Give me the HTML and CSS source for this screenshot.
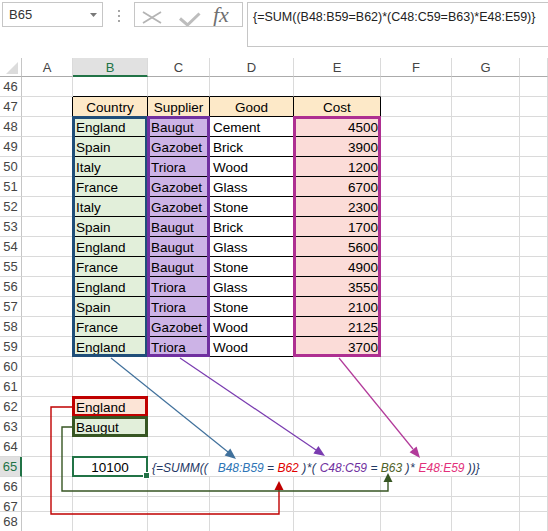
FILE: index.html
```html
<!DOCTYPE html>
<html lang="en">
<head>
    <meta charset="UTF-8">
    <title>SUMM array formula</title>
    <link rel="stylesheet" href="styles.css">
</head>
<body>

<div class="app">

    <!-- Formula bar -->
    <div class="formula-bar">
        <div class="name-box">
            <span>B65</span>
            <svg class="drop" width="7" height="4" viewBox="0 0 7 4"><path d="M0 0H7L3.5 4Z"/></svg>
        </div>
        <div class="grip"><i></i><i></i><i></i></div>
        <div class="fx-box">
            <svg width="107" height="23" viewBox="0 0 107 23">
                <path d="M8 9L26 20M8 20L26 9" stroke="#b4b4b4" stroke-width="1.8" fill="none"/>
                <path d="M45 15.5L52.5 22L64.5 10.5" stroke="#bdbdbd" stroke-width="3" fill="none"/>
                <text x="78" y="19" class="fx">fx</text>
            </svg>
        </div>
        <div class="formula-box">{=SUM((B48:B59=B62)*(C48:C59=B63)*E48:E59)}</div>
    </div>

    <!-- Sheet -->
    <div class="sheet">
        <div class="cells">
            <!-- column headers -->
            <div class="c corner"><svg width="12" height="12" viewBox="0 0 12 12"><path d="M12 0V12H0Z"/></svg></div>
            <div class="c ch">A</div>
            <div class="c ch active">B</div>
            <div class="c ch">C</div>
            <div class="c ch">D</div>
            <div class="c ch">E</div>
            <div class="c ch">F</div>
            <div class="c ch">G</div>
            <div class="c ch"></div>

            <!-- 46 -->
            <div class="c rh">46</div><div class="c"></div>
            <div class="c bb"></div><div class="c bb"></div><div class="c bb"></div><div class="c bb"></div>
            <div class="c"></div><div class="c"></div><div class="c"></div>

            <!-- 47 -->
            <div class="c rh">47</div><div class="c br"></div>
            <div class="c t hd">Country</div><div class="c t hd">Supplier</div><div class="c t hd">Good</div><div class="c t hd">Cost</div>
            <div class="c"></div><div class="c"></div><div class="c"></div>

            <!-- 48 -->
            <div class="c rh">48</div><div class="c br"></div>
            <div class="c t g">England</div><div class="c t p">Baugut</div><div class="c t">Cement</div><div class="c t k">4500</div>
            <div class="c"></div><div class="c"></div><div class="c"></div>

            <!-- 49 -->
            <div class="c rh">49</div><div class="c br"></div>
            <div class="c t g">Spain</div><div class="c t p">Gazobet</div><div class="c t">Brick</div><div class="c t k">3900</div>
            <div class="c"></div><div class="c"></div><div class="c"></div>

            <!-- 50 -->
            <div class="c rh">50</div><div class="c br"></div>
            <div class="c t g">Italy</div><div class="c t p">Triora</div><div class="c t">Wood</div><div class="c t k">1200</div>
            <div class="c"></div><div class="c"></div><div class="c"></div>

            <!-- 51 -->
            <div class="c rh">51</div><div class="c br"></div>
            <div class="c t g">France</div><div class="c t p">Gazobet</div><div class="c t">Glass</div><div class="c t k">6700</div>
            <div class="c"></div><div class="c"></div><div class="c"></div>

            <!-- 52 -->
            <div class="c rh">52</div><div class="c br"></div>
            <div class="c t g">Italy</div><div class="c t p">Gazobet</div><div class="c t">Stone</div><div class="c t k">2300</div>
            <div class="c"></div><div class="c"></div><div class="c"></div>

            <!-- 53 -->
            <div class="c rh">53</div><div class="c br"></div>
            <div class="c t g">Spain</div><div class="c t p">Baugut</div><div class="c t">Brick</div><div class="c t k">1700</div>
            <div class="c"></div><div class="c"></div><div class="c"></div>

            <!-- 54 -->
            <div class="c rh">54</div><div class="c br"></div>
            <div class="c t g">England</div><div class="c t p">Baugut</div><div class="c t">Glass</div><div class="c t k">5600</div>
            <div class="c"></div><div class="c"></div><div class="c"></div>

            <!-- 55 -->
            <div class="c rh">55</div><div class="c br"></div>
            <div class="c t g">France</div><div class="c t p">Baugut</div><div class="c t">Stone</div><div class="c t k">4900</div>
            <div class="c"></div><div class="c"></div><div class="c"></div>

            <!-- 56 -->
            <div class="c rh">56</div><div class="c br"></div>
            <div class="c t g">England</div><div class="c t p">Triora</div><div class="c t">Glass</div><div class="c t k">3550</div>
            <div class="c"></div><div class="c"></div><div class="c"></div>

            <!-- 57 -->
            <div class="c rh">57</div><div class="c br"></div>
            <div class="c t g">Spain</div><div class="c t p">Triora</div><div class="c t">Stone</div><div class="c t k">2100</div>
            <div class="c"></div><div class="c"></div><div class="c"></div>

            <!-- 58 -->
            <div class="c rh">58</div><div class="c br"></div>
            <div class="c t g">France</div><div class="c t p">Gazobet</div><div class="c t">Wood</div><div class="c t k">2125</div>
            <div class="c"></div><div class="c"></div><div class="c"></div>

            <!-- 59 -->
            <div class="c rh">59</div><div class="c br"></div>
            <div class="c t g">England</div><div class="c t p">Triora</div><div class="c t">Wood</div><div class="c t k">3700</div>
            <div class="c"></div><div class="c"></div><div class="c"></div>

            <!-- 60 -->
            <div class="c rh">60</div><div class="c"></div><div class="c"></div><div class="c"></div><div class="c"></div>
            <div class="c"></div><div class="c"></div><div class="c"></div><div class="c"></div>

            <!-- 61 -->
            <div class="c rh">61</div><div class="c"></div><div class="c"></div><div class="c"></div><div class="c"></div>
            <div class="c"></div><div class="c"></div><div class="c"></div><div class="c"></div>

            <!-- 62 -->
            <div class="c rh">62</div><div class="c"></div><div class="c o">England</div><div class="c"></div><div class="c"></div>
            <div class="c"></div><div class="c"></div><div class="c"></div><div class="c"></div>

            <!-- 63 -->
            <div class="c rh">63</div><div class="c"></div><div class="c g">Baugut</div><div class="c"></div><div class="c"></div>
            <div class="c"></div><div class="c"></div><div class="c"></div><div class="c"></div>

            <!-- 64 -->
            <div class="c rh">64</div><div class="c"></div><div class="c"></div><div class="c"></div><div class="c"></div>
            <div class="c"></div><div class="c"></div><div class="c"></div><div class="c"></div>

            <!-- 65: result and the formula written out -->
            <div class="c rh active">65</div><div class="c"></div><div class="c mid">10100</div>
            <div class="c formula"><span class="f-nv">{=SUMM((</span>   <span class="f-bl">B48:B59</span> <span class="f-nv">=</span> <span class="f-rd">B62</span> <span class="f-nv op">)*(</span> <span class="f-pu">C48:C59</span> <span class="f-nv">=</span> <span class="f-gr">B63</span> <span class="f-nv op">)*</span> <span class="f-pk">E48:E59</span> <span class="f-nv">))}</span></div>
            <div class="c"></div>

            <!-- 66 -->
            <div class="c rh">66</div><div class="c"></div><div class="c"></div><div class="c"></div><div class="c"></div>
            <div class="c"></div><div class="c"></div><div class="c"></div><div class="c"></div>

            <!-- 67 -->
            <div class="c rh">67</div><div class="c"></div><div class="c"></div><div class="c"></div><div class="c"></div>
            <div class="c"></div><div class="c"></div><div class="c"></div><div class="c"></div>

            <!-- 68 -->
            <div class="c rh">68</div><div class="c"></div><div class="c"></div><div class="c"></div><div class="c"></div>
            <div class="c"></div><div class="c"></div><div class="c"></div><div class="c"></div>
        </div>

        <!-- Range outlines, stacked on the same grid -->
        <div class="ranges">
            <div class="rng rng-country"></div>
            <div class="rng rng-supplier"></div>
            <div class="rng rng-cost"></div>
            <div class="rng rng-b62"></div>
            <div class="rng rng-b63"></div>
            <div class="rng rng-sel"></div>
        </div>
    </div>

    <!-- Arrows from ranges to the formula arguments -->
    <svg class="arrows" width="548" height="531" viewBox="0 0 548 531">
        <g fill="none" stroke-width="1.2">
            <path d="M111 358L228 452" stroke="#41719c"/>
            <path d="M180 358L316 450" stroke="#7a3cb0"/>
            <path d="M339 358L413 449" stroke="#b23a9a"/>
            <path d="M72 407H51V514H279V489" stroke="#c00000" stroke-width="1.4"/>
            <path d="M72 427H62V491H388V481" stroke="#375623" stroke-width="1.4"/>
        </g>
        <polygon points="236,459 224.6,455.6 230.3,448.6" fill="#41719c"/>
        <polygon points="325,456 313.4,453.6 318.4,446.1" fill="#7a3cb0"/>
        <polygon points="420,458 409.6,452.3 416.6,446.6" fill="#b23a9a"/>
        <polygon points="279,481 274.5,490 283.5,490" fill="#c00000"/>
        <polygon points="388,473 383.5,482 392.5,482" fill="#375623"/>
    </svg>

</div>

</body>
</html>
```

FILE: styles.css
```css
body {
    margin: 0;
    font-family: "Liberation Sans", Arial, sans-serif;
    background-color: #fff;
}
.app {
    position: relative;
    width: 548px;
    height: 531px;
    overflow: hidden;
}

/* formula bar */
.formula-bar {
    display: flex;
    align-items: flex-start;
    height: 58px;
    padding-top: 2px;
    box-sizing: border-box;
}
.name-box {
    margin-left: 2px;
    width: 101px;
    height: 25px;
    border: 1px solid #c6c6c6;
    box-sizing: border-box;
    display: flex;
    align-items: center;
    justify-content: space-between;
    padding: 0 5px 0 6px;
    font-size: 13px;
    color: #333;
}
.name-box .drop {
    fill: #787878;
}
.grip {
    width: 31px;
    display: flex;
    flex-direction: column;
    align-items: center;
    gap: 3px;
    padding-top: 8px;
}
.grip i {
    display: block;
    width: 2px;
    height: 2px;
    background-color: #a6a6a6;
}
.fx-box {
    width: 109px;
    height: 25px;
    border: 1px solid #c6c6c6;
    box-sizing: border-box;
}
.fx-box svg {
    display: block;
}
.fx {
    font-family: "Liberation Serif", serif;
    font-style: italic;
    font-size: 22px;
    fill: #707070;
}
.formula-box {
    margin-left: 4px;
    flex: 1;
    height: 45px;
    border: 1px solid #c6c6c6;
    border-right: none;
    box-sizing: border-box;
    padding: 7px 0 0 5px;
    font-size: 12.5px;
    line-height: 14px;
    color: #222;
    white-space: nowrap;
}

/* sheet grid */
.sheet {
    display: grid;
}
.cells, .ranges {
    grid-area: 1 / 1;
    display: grid;
    grid-template-columns: 22px 51px 75px 62px 84px 87px 71px 68px 28px;
    grid-template-rows: 19px repeat(21, 20px) 15px 20px;
}
.c {
    box-sizing: border-box;
    border-right: 1px solid #dadada;
    border-bottom: 1px solid #dadada;
    padding: 0 3px;
    font-size: 13.5px;
    line-height: 22px;
    white-space: nowrap;
    color: #000;
}
.corner {
    border-right-color: #c6c6c6;
    border-bottom-color: #ababab;
    display: flex;
    align-items: flex-end;
    justify-content: flex-end;
    padding: 0 3px 2px 0;
}
.corner svg {
    fill: #dcdcdc;
}
.ch {
    border-bottom-color: #ababab;
    text-align: center;
    font-size: 13px;
    line-height: 19px;
    color: #444;
}
.ch.active {
    background-color: #e1e1e1;
    border-bottom: 2px solid #217346;
    color: #217346;
}
.rh {
    border-right-color: #c6c6c6;
    padding: 0;
    text-align: center;
    font-size: 13px;
    line-height: 20px;
    color: #444;
}
.rh.active {
    background-color: #e1e1e1;
    border-right: 2px solid #217346;
    color: #217346;
}

/* table */
.t {
    border-right-color: #000;
    border-bottom-color: #000;
}
.bb {
    border-bottom-color: #000;
}
.br {
    border-right-color: #000;
}
.hd {
    background-color: #fde9c8;
    text-align: center;
}
.g {
    background-color: #e2efda;
}
.p {
    background-color: #ccb3e6;
}
.k {
    background-color: #fbdcd8;
    text-align: right;
    padding-right: 2px;
}
.o {
    background-color: #fce4d6;
}
.mid {
    text-align: center;
}

/* formula spelled out in row 65 */
.formula {
    grid-column: span 5;
    padding-left: 4px;
    font-size: 12px;
    font-style: italic;
    white-space: pre;
}
.op {
    letter-spacing: 0.5px;
}
.f-nv { color: #1f3864; }
.f-bl { color: #2e75b6; }
.f-rd { color: #e00000; }
.f-pu { color: #7030a0; }
.f-gr { color: #4f6228; }
.f-pk { color: #e2307a; }

/* range outlines */
.rng {
    box-sizing: border-box;
    border: 3px solid;
    margin: -1px 0 0 -1px;
}
.rng-country {
    grid-column: 3;
    grid-row: 4 / 16;
    border-color: #1f4e79;
}
.rng-supplier {
    grid-column: 4;
    grid-row: 4 / 16;
    border-color: #7030a0;
}
.rng-cost {
    grid-column: 6;
    grid-row: 4 / 16;
    border-color: #ae2f91;
}
.rng-b62 {
    grid-column: 3;
    grid-row: 18;
    border-color: #c00000;
}
.rng-b63 {
    grid-column: 3;
    grid-row: 19;
    border-color: #375623;
}
.rng-sel {
    grid-column: 3;
    grid-row: 21;
    position: relative;
    border: 2px solid #217346;
}
.rng-sel::after {
    content: "";
    position: absolute;
    right: -4px;
    bottom: -4px;
    width: 5px;
    height: 5px;
    background-color: #217346;
    border: 1px solid #fff;
}

.arrows {
    position: absolute;
    left: 0;
    top: 0;
    pointer-events: none;
}
```
